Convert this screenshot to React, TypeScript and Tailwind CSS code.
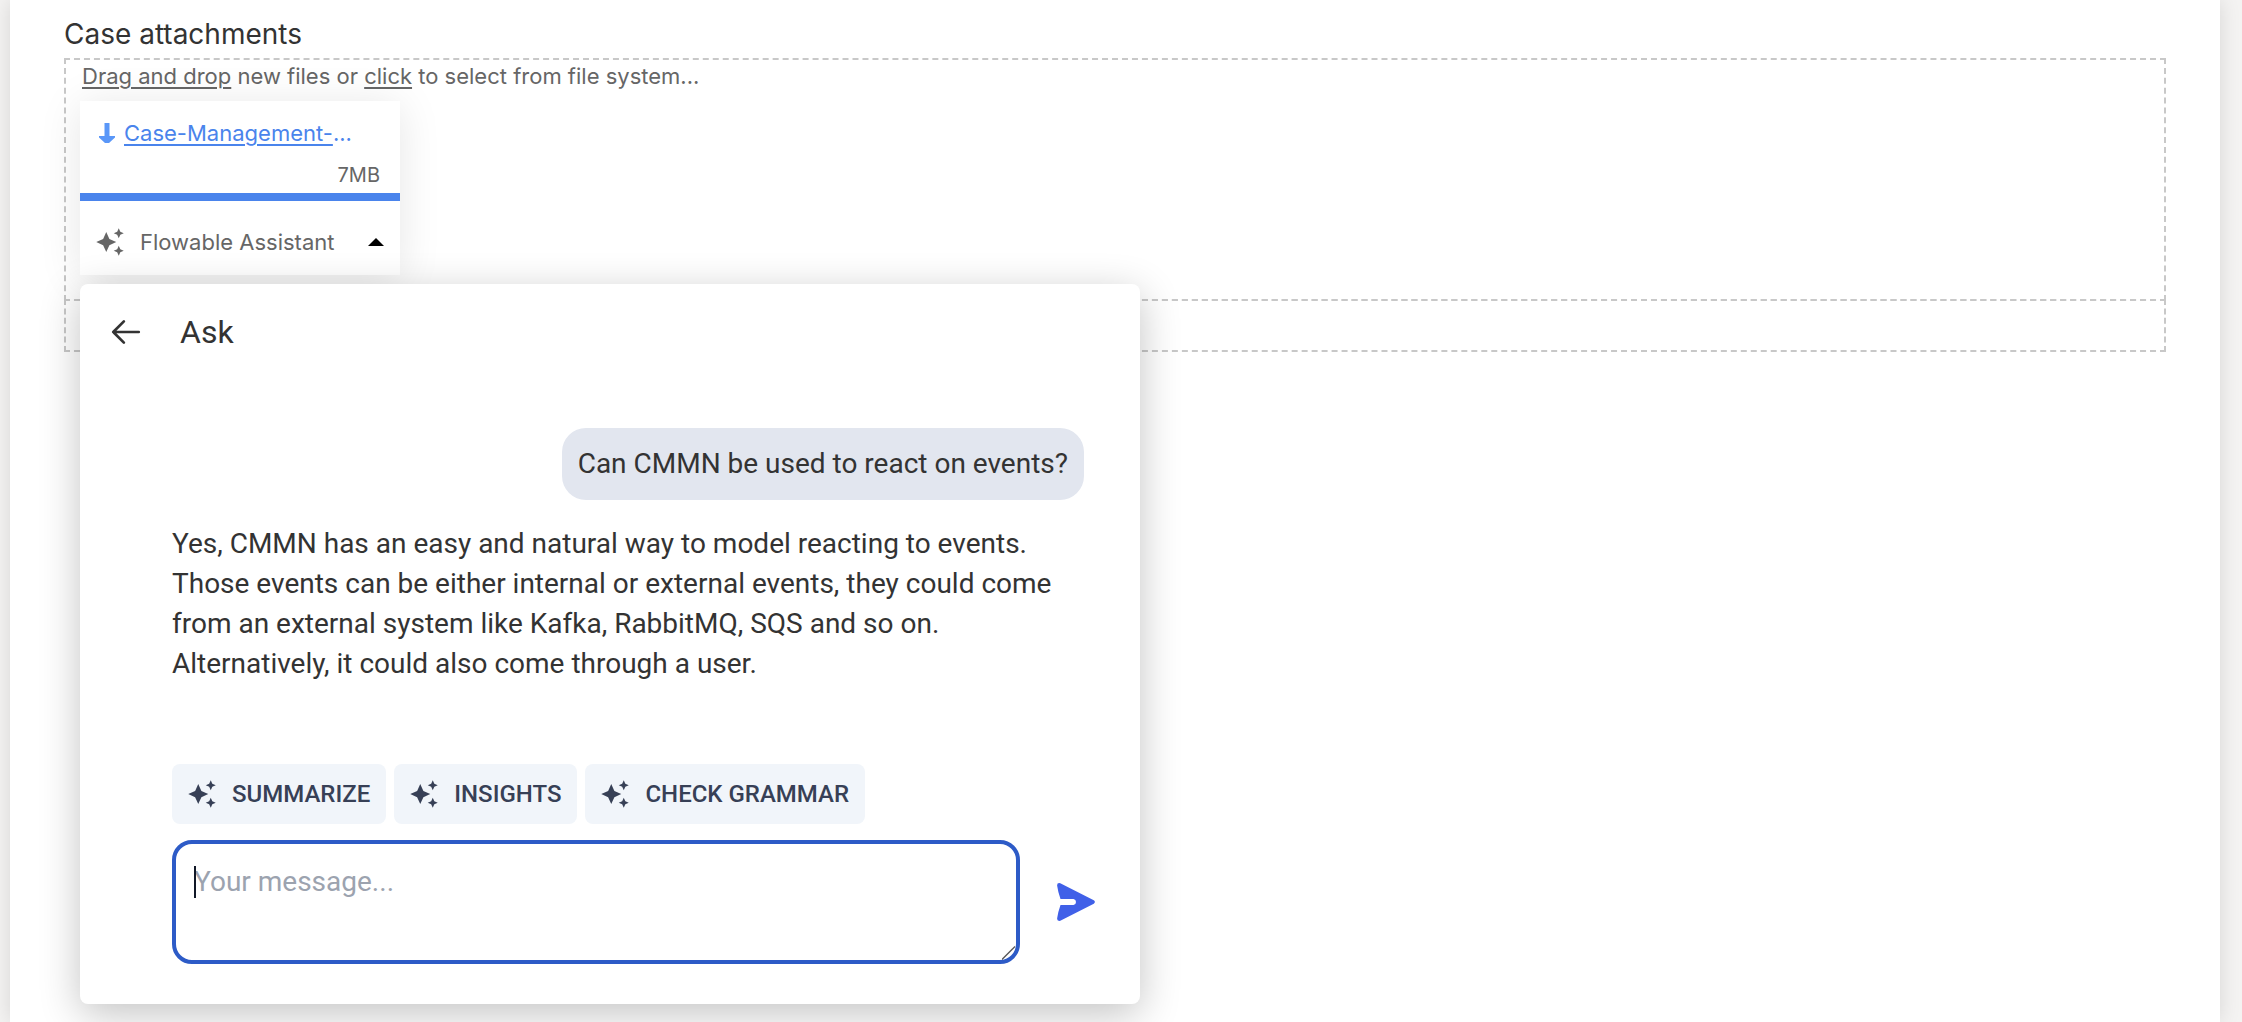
import React, { useState } from 'react';

interface IconProps {
  className?: string;
}

const SparklesIcon: React.FC<IconProps> = ({ className }) => (
  <svg viewBox="0 0 24 24" fill="currentColor" className={className} aria-hidden="true">
    <path d="M19 9l1.25-2.75L23 5l-2.75-1.25L19 1l-1.25 2.75L15 5l2.75 1.25zM11.5 9.5L9 4 6.5 9.5 1 12l5.5 2.5L9 20l2.5-5.5L17 12zM19 15l-1.25 2.75L15 19l2.75 1.25L19 23l1.25-2.75L23 19l-2.75-1.25z" />
  </svg>
);

const DownloadIcon: React.FC<IconProps> = ({ className }) => (
  <svg viewBox="0 0 16 20" fill="currentColor" className={className} aria-hidden="true">
    <path d="M5.5 0h5v13H16v1.5L10 20H6L0 14.5V13h5.5z" />
  </svg>
);

const BackIcon: React.FC<IconProps> = ({ className }) => (
  <svg
    viewBox="0 0 24 24"
    fill="none"
    stroke="currentColor"
    strokeWidth={1.9}
    strokeLinecap="round"
    strokeLinejoin="round"
    className={className}
    aria-hidden="true"
  >
    <path d="M10.5 19.5L3 12l7.5-7.5M3 12h18" />
  </svg>
);

const SendIcon: React.FC<IconProps> = ({ className }) => (
  <svg viewBox="0 0 40 40" fill="currentColor" className={className} aria-hidden="true">
    <path d="M4.3 1.2L37.8 18.3Q40 20 37.8 21.7L4.3 38.8Q1 39.5 1.1 36.5Q2 30 4.5 23H17.5Q20 22.6 20 20T17.5 17H4.5Q2 10 1.1 3.5Q1 .5 4.3 1.2Z" />
  </svg>
);

interface SuggestionButtonProps {
  label: string;
  onClick: () => void;
}

const SuggestionButton: React.FC<SuggestionButtonProps> = ({ label, onClick }) => (
  <button
    type="button"
    onClick={onClick}
    className="flex h-15 items-center gap-[15px] rounded-lg bg-[#f1f5fa] pr-4 pl-[15px] text-2xl font-medium text-[#374056]"
  >
    <SparklesIcon className="size-[30px] shrink-0" />
    {label}
  </button>
);

const suggestions = ['SUMMARIZE', 'INSIGHTS', 'CHECK GRAMMAR'];

const AssistantPanel: React.FC = () => {
  const [message, setMessage] = useState('');

  return (
    <section
      aria-label="Flowable Assistant"
      className="absolute top-full left-0 z-10 mt-[9px] flex w-[1060px] flex-col rounded-lg bg-white pb-10 font-[Roboto,sans-serif] text-[28px] leading-10 text-[#333333] shadow-[0_10px_40px_rgba(0,0,0,0.24)]"
    >
      <header className="flex h-24 items-center gap-[37px] pl-[29px]">
        <button type="button" aria-label="Back">
          <BackIcon className="size-[34px]" />
        </button>
        <h2 className="text-[32px]">Ask</h2>
      </header>

      <div className="flex flex-col gap-6 pt-12 pr-14 pl-23">
        <p className="self-end rounded-3xl bg-[#e2e6ef] p-4">Can CMMN be used to react on events?</p>
        <p className="pr-6">
          Yes, CMMN has an easy and natural way to model reacting to events. Those events can be either internal or
          external events, they could come from an external system like Kafka, RabbitMQ, SQS and so on. Alternatively,
          it could also come through a user.
        </p>
      </div>

      <div className="flex gap-2 pt-20 pl-23">
        {suggestions.map((label) => (
          <SuggestionButton key={label} label={label} onClick={() => setMessage(label)} />
        ))}
      </div>

      <form className="flex items-center gap-8 pt-4 pr-10 pl-23" onSubmit={(e) => e.preventDefault()}>
        <div className="relative flex flex-1">
          <textarea
            aria-label="Your message"
            placeholder="Your message..."
            value={message}
            onChange={(e) => setMessage(e.target.value)}
            className="h-31 w-full resize-none rounded-[20px] border-4 border-[#2d5bc7] px-[18px] py-[18px] caret-transparent outline-none placeholder:text-[#9ca3af]"
          />
          {!message && <span className="absolute top-[26px] left-[22px] h-8 w-[2px] bg-[#111827]" />}
          <svg
            viewBox="0 0 14 14"
            className="pointer-events-none absolute right-1 bottom-1 size-[14px] text-[#555555]"
            fill="none"
            stroke="currentColor"
            strokeWidth={1.3}
            aria-hidden="true"
          >
            <path d="M0 13.500L13 .5" />
          </svg>
        </div>
        <button type="submit" aria-label="Send" className="p-1 text-[#4060e8]">
          <SendIcon className="size-10" />
        </button>
      </form>
    </section>
  );
};

const AttachmentCard: React.FC = () => (
  <div className="relative w-80">
    <div className="bg-white shadow-[0_4px_40px_rgba(0,0,0,0.1)]">
      <div className="flex h-23 flex-col justify-between pt-4 pr-5 pl-[19px]">
        <div className="flex items-center gap-[9px] text-[#4a84ec]">
          <DownloadIcon className="h-5 w-4 shrink-0 text-[#5a97f8]" />
          <a href="#file" className="text-[22px] leading-8">
            <span className="underline decoration-2 underline-offset-3">Case-Management-</span>...
          </a>
        </div>
        <span className="text-right text-xl leading-9 text-[#666666]">7MB</span>
      </div>
      <div className="h-2 bg-[#4a84ec]" />
      <button
        type="button"
        className="flex h-[74px] w-full items-center gap-[15px] pt-2 pr-4 pl-[15px] text-[22px] text-[#666666]"
      >
        <SparklesIcon className="size-[30px] shrink-0" />
        <span className="flex-1 text-left">Flowable Assistant</span>
        <svg viewBox="0 0 16 8" className="h-2 w-4 text-black" fill="currentColor" aria-hidden="true">
          <path d="M0 8L8 0l8 8z" />
        </svg>
      </button>
    </div>
    <AssistantPanel />
  </div>
);

export default function App() {
  return (
    <div className="min-h-screen bg-[#f4f3f2] pr-[22px] pl-[10px] font-[Inter,sans-serif]">
      <main className="min-h-screen bg-white px-[54px] pt-[14px] shadow-[0_0_20px_rgba(0,0,0,0.12)]">
        <h1 className="h-11 text-[28px] leading-10 text-[#333333]">Case attachments</h1>

        <div className="h-[243px] border-2 border-dashed border-[#c8c8c8] px-[14px]">
          <p className="mb-[9px] px-[2px] text-[22px] leading-8 text-[#666666]">
            <a href="#drop" className="underline decoration-2 underline-offset-3">Drag and drop</a> new files or{' '}
            <a href="#select" className="underline decoration-2 underline-offset-3">click</a> to select from file
            system...
          </p>
          <AttachmentCard />
        </div>
        <div className="-mt-[2px] h-[53px] border-2 border-dashed border-[#c8c8c8]" />
      </main>
    </div>
  );
}
